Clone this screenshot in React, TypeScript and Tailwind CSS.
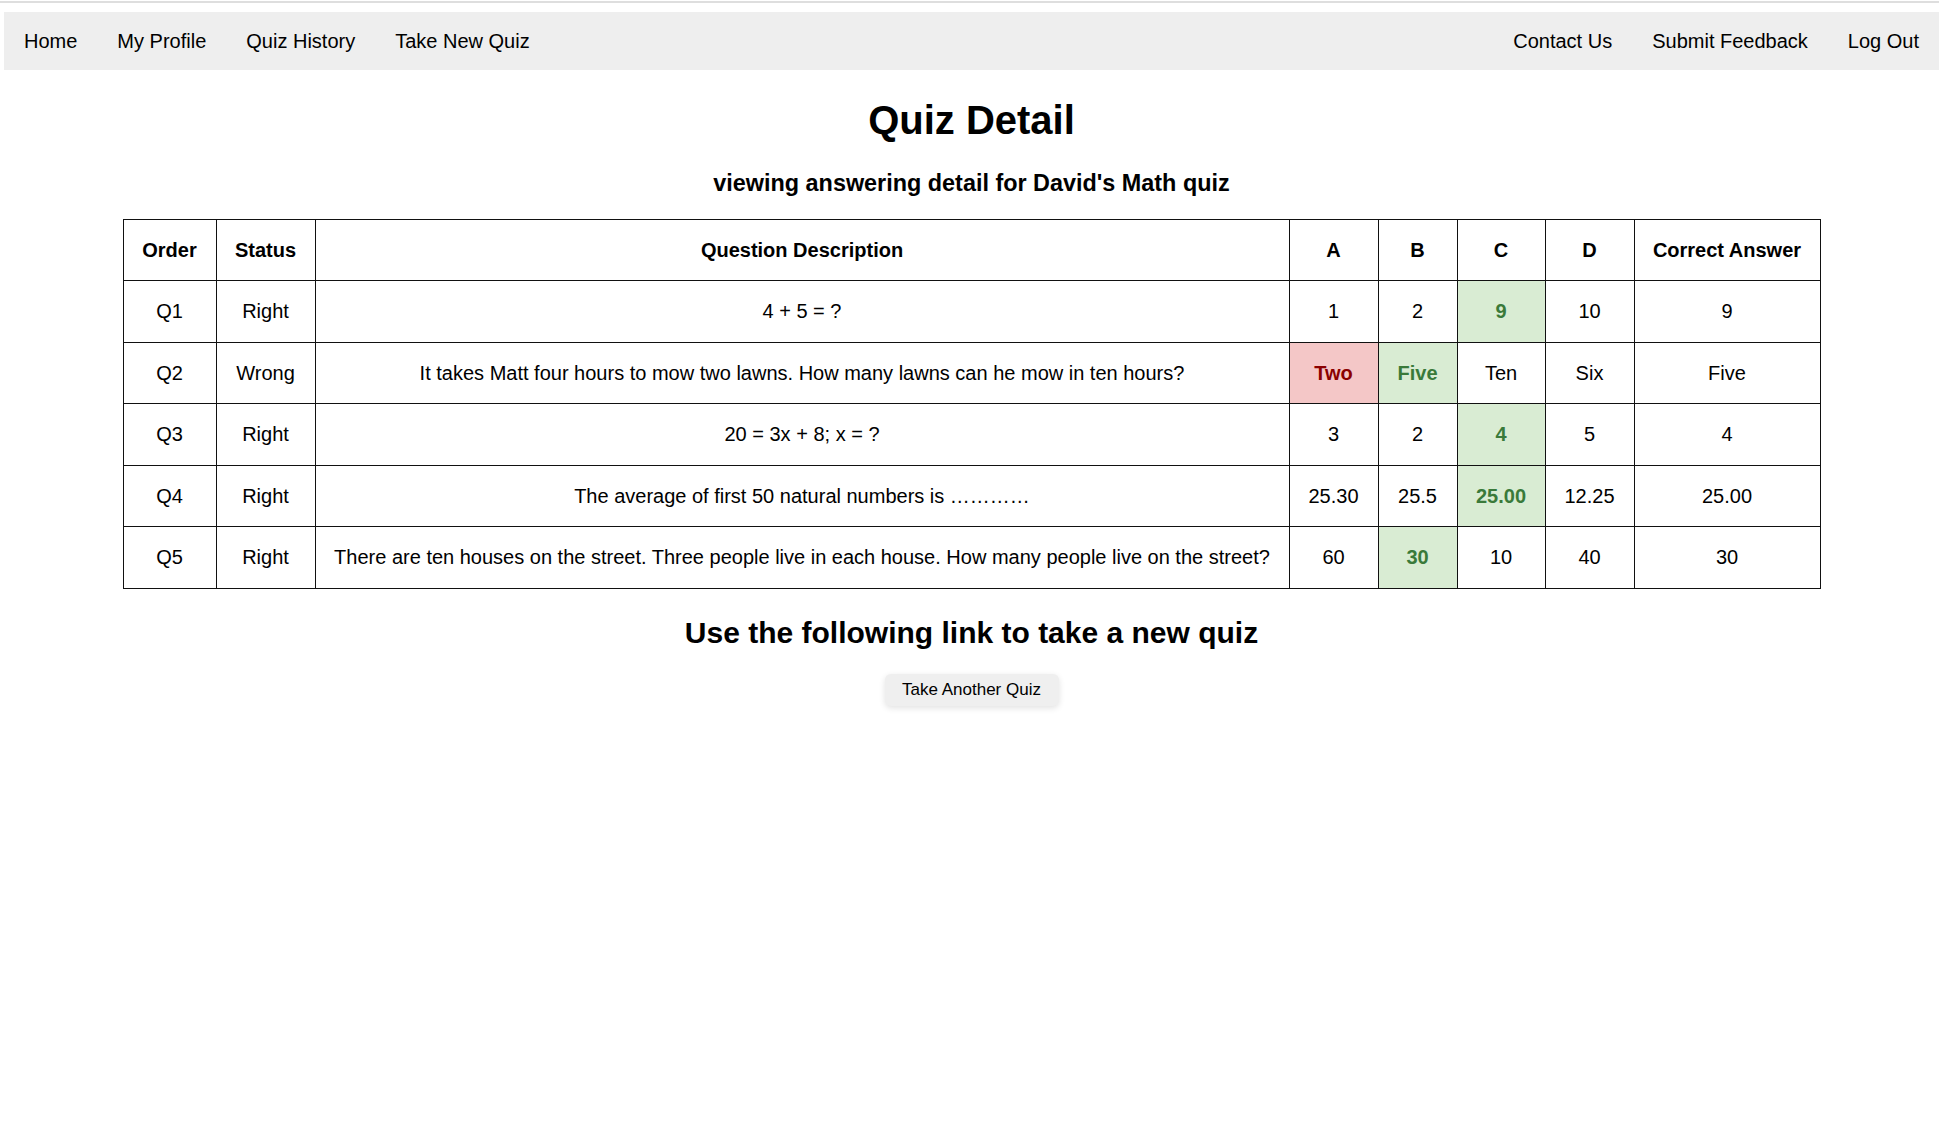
import React from 'react';

type Mark = 'right' | 'wrong' | undefined;

interface Row {
    order: string;
    status: string;
    question: string;
    options: [string, Mark][];
    correct: string;
}

const rows: Row[] = [
    {
        order: 'Q1',
        status: 'Right',
        question: '4 + 5 = ?',
        options: [['1', undefined], ['2', undefined], ['9', 'right'], ['10', undefined]],
        correct: '9',
    },
    {
        order: 'Q2',
        status: 'Wrong',
        question: 'It takes Matt four hours to mow two lawns. How many lawns can he mow in ten hours?',
        options: [['Two', 'wrong'], ['Five', 'right'], ['Ten', undefined], ['Six', undefined]],
        correct: 'Five',
    },
    {
        order: 'Q3',
        status: 'Right',
        question: '20 = 3x + 8; x = ?',
        options: [['3', undefined], ['2', undefined], ['4', 'right'], ['5', undefined]],
        correct: '4',
    },
    {
        order: 'Q4',
        status: 'Right',
        question: 'The average of first 50 natural numbers is …………',
        options: [['25.30', undefined], ['25.5', undefined], ['25.00', 'right'], ['12.25', undefined]],
        correct: '25.00',
    },
    {
        order: 'Q5',
        status: 'Right',
        question: 'There are ten houses on the street. Three people live in each house. How many people live on the street?',
        options: [['60', undefined], ['30', 'right'], ['10', undefined], ['40', undefined]],
        correct: '30',
    },
];

const navLeft = ['Home', 'My Profile', 'Quiz History', 'Take New Quiz'];
const navRight = ['Contact Us', 'Submit Feedback', 'Log Out'];

function optionClass(mark: Mark) {
    if (mark === 'right') return 'bg-[#d9ecd3] text-[#3a7a3a] font-bold';
    if (mark === 'wrong') return 'bg-[#f4c7c7] text-[#8b0000] font-bold';
    return '';
}

export default function App() {
    return (
        <div className="min-h-screen bg-white text-black text-[20px]" style={{ fontFamily: '"Liberation Sans", Arial, Helvetica, sans-serif' }}>
            <div className="h-[2px] mt-px bg-[#dedede]" />

            <div className="pl-1">
                {/* Nav */}
                <nav className="mt-[9px] h-[58px] bg-[#eeeeee] flex items-center justify-between">
                    <ul className="flex items-center">
                        {navLeft.map(item => (
                            <li key={item}>
                                <a className="px-5 py-4 block cursor-pointer">{item}</a>
                            </li>
                        ))}
                    </ul>
                    <ul className="flex items-center">
                        {navRight.map(item => (
                            <li key={item}>
                                <a className="px-5 py-4 block cursor-pointer">{item}</a>
                            </li>
                        ))}
                    </ul>
                </nav>

                <h1 className="mt-[27px] text-center text-[40px] leading-[46px] font-bold">Quiz Detail</h1>
                <h3 className="mt-[27px] text-center text-[23.4px] leading-[27px] font-bold">
                    viewing answering detail for David's Math quiz
                </h3>

                {/* Detail table */}
                <table className="mt-[22px] mx-auto table-fixed border-collapse w-[1697px]">
                    <colgroup>
                        <col className="w-[93px]" />
                        <col className="w-[99px]" />
                        <col className="w-[974px]" />
                        <col className="w-[89px]" />
                        <col className="w-[79px]" />
                        <col className="w-[88px]" />
                        <col className="w-[89px]" />
                        <col className="w-[186px]" />
                    </colgroup>
                    <thead>
                        <tr className="h-[61px]">
                            {['Order', 'Status', 'Question Description', 'A', 'B', 'C', 'D', 'Correct Answer'].map(h => (
                                <th key={h} className="border border-[#111] font-bold text-center">{h}</th>
                            ))}
                        </tr>
                    </thead>
                    <tbody>
                        {rows.map(r => (
                            <tr key={r.order} className="h-[61.5px]">
                                <td className="border border-[#111] text-center">{r.order}</td>
                                <td className="border border-[#111] text-center">{r.status}</td>
                                <td className="border border-[#111] text-center whitespace-nowrap">{r.question}</td>
                                {r.options.map(([opt, mark], i) => (
                                    <td key={i} className={`border border-[#111] text-center ${optionClass(mark)}`}>{opt}</td>
                                ))}
                                <td className="border border-[#111] text-center">{r.correct}</td>
                            </tr>
                        ))}
                    </tbody>
                </table>

                <h2 className="mt-[27px] text-center text-[30px] leading-[34px] font-bold">Use the following link to take a new quiz</h2>

                <div className="mt-[24px] flex justify-center">
                    <button className="w-[174px] h-[32px] rounded-md bg-[#efefef] text-[17px] text-black shadow-[0_2px_6px_rgba(0,0,0,0.12)]">
                        Take Another Quiz
                    </button>
                </div>
            </div>
        </div>
    );
}
